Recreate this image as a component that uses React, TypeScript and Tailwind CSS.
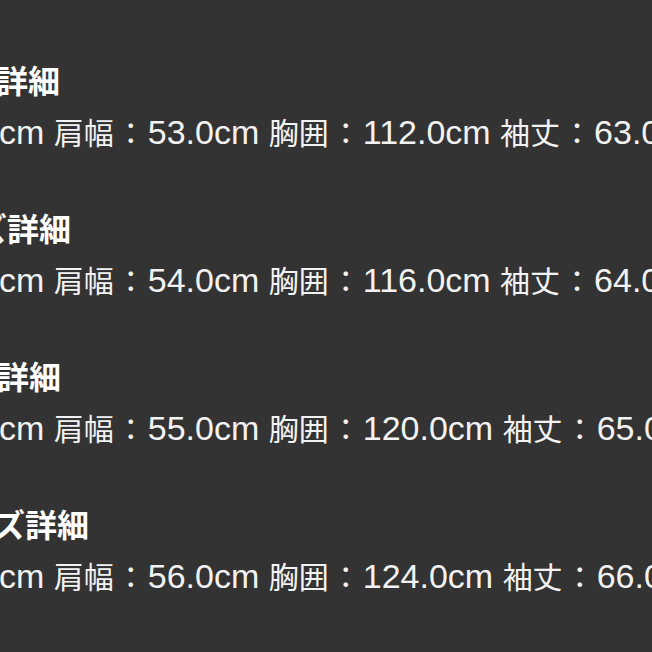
import React from "react";

const L = ({ children }: { children: React.ReactNode }) => (
  <span className="text-[34px] leading-[40px] [font-family:'Liberation_Sans',Arial,sans-serif]">
    {children}
  </span>
);

const C = () => <span className="mx-[2px]">：</span>;

const rows = [
  { size: "S", pre: "ml-[-204px]", len: "70.0", shoulder: "53.0", chest: "112.0", sleeve: "63.0" },
  { size: "M", pre: "ml-[-193px]", len: "72.0", shoulder: "54.0", chest: "116.0", sleeve: "64.0" },
  { size: "L", pre: "ml-[-203px]", len: "74.0", shoulder: "55.0", chest: "120.0", sleeve: "65.0" },
  { size: "XL", pre: "ml-[-175px]", len: "76.0", shoulder: "56.0", chest: "124.0", sleeve: "66.0" },
];

export default function App() {
  return (
    <div className="w-[652px] h-[652px] overflow-hidden bg-[#333333] text-white pt-[59px] [font-family:'Noto_Sans_CJK_JP',sans-serif]">
      <div className="flex flex-col gap-[56px]">
        {rows.map((r) => (
          <div key={r.size} className="flex flex-col gap-[12px]">
            <div className="flex whitespace-pre text-[32px] leading-[40px] font-bold h-[40px]">
              <span className={`${r.pre} w-[200px] shrink-0 text-right`}>
                <L>{r.size}</L>サイズ
              </span>
              <span className="shrink-0">詳細</span>
            </div>
            <div className="flex whitespace-pre text-[30px] leading-[40px] h-[40px] text-[#f2f2f2]">
              <span className="ml-[-301px] w-[300px] shrink-0 text-right">
                着丈<C /><L>{r.len}</L>
              </span>
              <span className="shrink-0">
                <L>cm </L>肩幅<C /><L>{r.shoulder}cm </L>胸囲<C /><L>{r.chest}cm </L>袖丈<C /><L>{r.sleeve}cm</L>
              </span>
            </div>
          </div>
        ))}
      </div>
    </div>
  );
}
